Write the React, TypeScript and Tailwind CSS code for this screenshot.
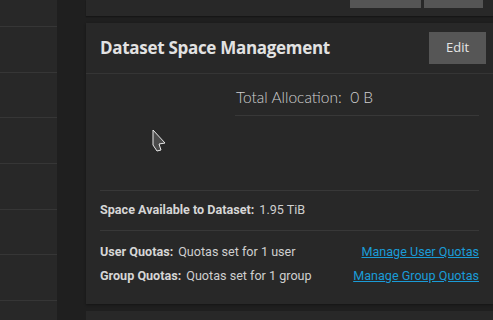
import React from "react";

export default function App() {
  const rowHeights = [26, 45, 44, 45, 45, 44, 45, 40];
  return (
    <div className="w-[493px] h-[320px] overflow-hidden bg-[#1f1f1f] flex font-['Roboto',sans-serif]">
      {/* left list panel */}
      <div className="w-[57px] shrink-0 bg-[#282828] flex flex-col">
        {rowHeights.map((h, i) => (
          <div
            key={i}
            className="shrink-0 border-b border-[#363636]"
            style={{ height: h + 1 }}
          />
        ))}
      </div>
      {/* main column */}
      <div className="ml-[29px] flex-1 flex flex-col">
        {/* previous card bottom */}
        <div className="h-[16px] shrink-0 bg-[#282828] shadow-[0_1px_1px_#161616] flex justify-end items-start pr-[10px] gap-[3px]">
          <div className="w-[71px] h-[8px] bg-[#555555]" />
          <div className="w-[59px] h-[8px] bg-[#555555]" />
        </div>
        {/* main card */}
        <div className="relative mt-[7px] h-[281px] shrink-0 bg-[#282828] shadow-[0_1px_2px_#151515] flex flex-col">
          <div className="h-[51px] shrink-0 border-b border-[#353535] flex items-center justify-between pl-[14px] pr-[7px]">
            <span className="font-['Open_Sans',sans-serif] font-bold text-[17px] text-[#e2e2e2] tracking-[-0.3px]">
              Dataset Space Management
            </span>
            <button className="w-[57px] h-[32px] bg-[#565656] text-[#e6e6e6] text-[13px] font-['Open_Sans',sans-serif]">
              Edit
            </button>
          </div>
          <div className="px-[14px] flex flex-col">
            <div className="h-[117px] shrink-0 border-b border-[#383838] flex">
              <div className="w-[135px] shrink-0" />
              <div className="flex-1 flex flex-col">
                <div className="h-[42px] border-b border-[#383838] flex items-center pl-[1px] pt-[7px] font-['Lato',sans-serif] font-light text-[15.5px] text-[#d0d0d0]">
                  Total Allocation:&nbsp; 0 B
                </div>
              </div>
            </div>
            <div className="h-[40px] shrink-0 border-b border-[#383838] flex items-center text-[12.6px]">
              <span className="font-bold text-[#d6d6d6]">Space Available to Dataset:</span>
              <span className="ml-[5px] text-[#cfcfcf]">1.95 TiB</span>
            </div>
            <div className="pt-[13px] flex flex-col gap-[8px] text-[12.6px]">
              <div className="h-[16px] flex items-center justify-between">
                <div>
                  <span className="font-bold text-[#d6d6d6]">User Quotas:</span>
                  <span className="ml-[5px] text-[#cfcfcf]">Quotas set for 1 user</span>
                </div>
                <a className="text-[#1a9bd7] underline">Manage User Quotas</a>
              </div>
              <div className="h-[16px] flex items-center justify-between">
                <div>
                  <span className="font-bold text-[#d6d6d6]">Group Quotas:</span>
                  <span className="ml-[5px] text-[#cfcfcf]">Quotas set for 1 group</span>
                </div>
                <a className="text-[#1a9bd7] underline">Manage Group Quotas</a>
              </div>
            </div>
          </div>
          {/* mouse cursor */}
          <svg
            className="absolute left-[66px] top-[106px]"
            width="16"
            height="24"
            viewBox="0 0 16 24"
          >
            <polygon
              points="1,1 13,14 7,15 9,21 5,22 1,16"
              fill="#4a4a4a"
              stroke="#e8e8e8"
              strokeWidth="1"
              strokeLinejoin="miter"
            />
          </svg>
        </div>
        <div className="mt-[7px] h-[20px] shrink-0 bg-[#282828]" />
      </div>
    </div>
  );
}
